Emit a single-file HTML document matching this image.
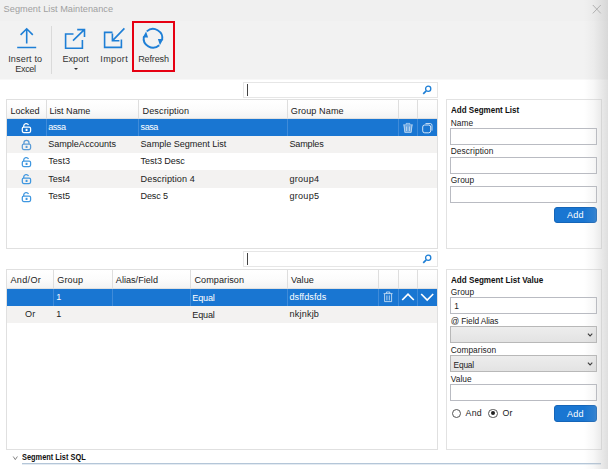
<!DOCTYPE html>
<html><head><meta charset="utf-8">
<style>
*{box-sizing:border-box;margin:0;padding:0}
html,body{width:608px;height:469px;overflow:hidden;background:#fff}
body{font-family:"Liberation Sans",sans-serif;font-size:9px;color:#222;position:relative}
.abs{position:absolute}
.t{position:absolute;white-space:nowrap;line-height:1}
.hdr{position:absolute;background:linear-gradient(#ffffff 0%,#fcfcfc 50%,#f3f3f3 100%);border-bottom:1px solid #e0e0e0}
.grid{position:absolute;border:1px solid #e0e0e0;background:#fff}
.vl{position:absolute;width:1px}
.row{position:absolute}
.inp{position:absolute;border:1px solid #b9bbc2;background:#fff}
.dd{position:absolute;border:1px solid #b8b8b8;background:linear-gradient(#ededed,#e3e3e3)}
.btn{position:absolute;background:#1976d2;border:1px solid #1565b8;border-radius:3px}
.panel{position:absolute;border:1px solid #e2e2e2;background:#fff}
</style></head><body>
<div class="abs" style="left:0;top:0;width:608px;height:21px;background:#f0f0f0"></div>
<div class="abs" style="left:0;top:21px;width:608px;height:58px;background:#f2f2f2"></div>
<div class="abs" style="left:0;top:79px;width:608px;height:1px;background:#f8f8f8"></div>
<svg class="abs" style="left:591px;top:3px" width="12" height="12" viewBox="0 0 12 12"><path d="M1.8 2L9.8 10.4M9.8 2L1.8 10.4" stroke="#a6a6a6" stroke-width="0.9" fill="none"/></svg>

<svg class="abs" style="left:14px;top:25px" width="26" height="26" viewBox="0 0 26 26"><path d="M3.2 22.5H22.2M12.7 18.6V4.2M6.6 9.9L12.7 3.8L18.8 9.9" stroke="#1e7fd6" stroke-width="1.6" fill="none"/></svg>
<div class="abs" style="left:51px;top:26px;width:1px;height:48px;background:#dadada"></div>
<svg class="abs" style="left:62px;top:25px" width="26" height="26" viewBox="0 0 26 26"><path d="M11.5 9H3.6V23.2H20.4V15M11 15.6L22.3 4.6M15.2 4.6H22.5V11.9" stroke="#1e7fd6" stroke-width="1.6" fill="none"/></svg>
<div class="abs" style="left:73.5px;top:67.6px;width:0;height:0;border-left:2.2px solid transparent;border-right:2.2px solid transparent;border-top:2.6px solid #333"></div>
<svg class="abs" style="left:101px;top:25px" width="26" height="26" viewBox="0 0 26 26"><path d="M11.5 7.4H3.6V22.4H20.4V14.4M23.4 3.4L11.6 15.6M11.4 8.6V15.8H18.4" stroke="#1e7fd6" stroke-width="1.6" fill="none"/></svg>
<div class="abs" style="left:132px;top:21px;width:43px;height:51px;border:2px solid #e60012"></div>
<svg class="abs" style="left:140px;top:25px" width="26" height="26" viewBox="0 0 26 26"><path d="M6.78 6.39 A9.3 9.3 0 0 1 22.10 15.23M19.22 20.21 A9.3 9.3 0 0 1 3.90 11.37" stroke="#1e7fd6" stroke-width="1.9" fill="none"/><path d="M17.89 13.98 L23.28 14.02 L19.93 20.21 ZM8.11 12.62 L2.72 12.58 L6.07 6.39 Z" fill="#1e7fd6"/></svg>

<div class="abs" style="left:243px;top:82px;width:195px;height:16px;border:1px solid #e6e6e6;background:#fff"></div>
<div class="abs" style="left:247px;top:83.6px;width:1.4px;height:12px;background:#444"></div>
<svg class="abs" style="left:421px;top:84px" width="12" height="12" viewBox="0 0 12 12"><circle cx="7.2" cy="4.8" r="2.6" stroke="#1e7fd6" stroke-width="1.3" fill="none"/><path d="M5.2 6.8L2.2 9.8" stroke="#1e7fd6" stroke-width="1.7"/></svg>
<div class="grid" style="left:6px;top:99px;width:432px;height:150px">
<div class="hdr" style="left:0;top:0;width:430px;height:19px"></div>
<div class="row" style="left:0;top:19px;width:430px;height:17px;background:#1976d2"></div>
<div class="row" style="left:0;top:36px;width:430px;height:17px;background:#f3f2f1"></div>
<div class="row" style="left:0;top:70px;width:430px;height:18px;background:#f3f2f1"></div>
<div class="vl" style="left:39px;top:0px;height:19px;background:#dedede"></div><div class="vl" style="left:131px;top:0px;height:19px;background:#dedede"></div><div class="vl" style="left:280px;top:0px;height:19px;background:#dedede"></div><div class="vl" style="left:391px;top:0px;height:19px;background:#dedede"></div><div class="vl" style="left:410px;top:0px;height:19px;background:#dedede"></div>
<div class="vl" style="left:39px;top:19px;height:17px;background:#3f8bd9"></div><div class="vl" style="left:131px;top:19px;height:17px;background:#3f8bd9"></div><div class="vl" style="left:280px;top:19px;height:17px;background:#3f8bd9"></div><div class="vl" style="left:391px;top:19px;height:17px;background:#3f8bd9"></div><div class="vl" style="left:410px;top:19px;height:17px;background:#3f8bd9"></div>
</div>
<svg class="abs" style="left:20.6px;top:121.7px" width="12" height="12" viewBox="0 0 12 12"><rect x="1.3" y="5.2" width="8.3" height="5.3" rx="1.4" stroke="#fff" stroke-width="1.25" fill="none"/><path d="M2.7 5V3.9A2.5 2.5 0 0 1 7.5 3.1" stroke="#fff" stroke-width="1.25" fill="none"/><rect x="4.6" y="6.8" width="1.9" height="2.2" fill="#fff"/></svg>
<svg class="abs" style="left:20.6px;top:138.7px" width="12" height="12" viewBox="0 0 12 12"><rect x="1.3" y="5.2" width="8.3" height="5.3" rx="1.4" stroke="#5a9bd6" stroke-width="1.25" fill="none"/><path d="M2.9 5V3.9A2.55 2.55 0 0 1 8 3.9V5" stroke="#5a9bd6" stroke-width="1.25" fill="none"/><rect x="4.6" y="6.8" width="1.9" height="2.2" fill="#5a9bd6"/></svg>
<svg class="abs" style="left:20.6px;top:155.7px" width="12" height="12" viewBox="0 0 12 12"><rect x="1.3" y="5.2" width="8.3" height="5.3" rx="1.4" stroke="#3f97e0" stroke-width="1.25" fill="none"/><path d="M2.7 5V3.9A2.5 2.5 0 0 1 7.5 3.1" stroke="#3f97e0" stroke-width="1.25" fill="none"/><rect x="4.6" y="6.8" width="1.9" height="2.2" fill="#3f97e0"/></svg>
<svg class="abs" style="left:20.6px;top:172.7px" width="12" height="12" viewBox="0 0 12 12"><rect x="1.3" y="5.2" width="8.3" height="5.3" rx="1.4" stroke="#3f97e0" stroke-width="1.25" fill="none"/><path d="M2.7 5V3.9A2.5 2.5 0 0 1 7.5 3.1" stroke="#3f97e0" stroke-width="1.25" fill="none"/><rect x="4.6" y="6.8" width="1.9" height="2.2" fill="#3f97e0"/></svg>
<svg class="abs" style="left:20.6px;top:190.7px" width="12" height="12" viewBox="0 0 12 12"><rect x="1.3" y="5.2" width="8.3" height="5.3" rx="1.4" stroke="#3f97e0" stroke-width="1.25" fill="none"/><path d="M2.7 5V3.9A2.5 2.5 0 0 1 7.5 3.1" stroke="#3f97e0" stroke-width="1.25" fill="none"/><rect x="4.6" y="6.8" width="1.9" height="2.2" fill="#3f97e0"/></svg>
<svg class="abs" style="left:402px;top:122px" width="12" height="12" viewBox="0 0 12 12"><path d="M1.6 3.2L2.6 10.6H9.4L10.4 3.2Z" fill="rgba(255,255,255,0.35)"/><path d="M1.2 2.8H10.8M4.2 2.4V1.4H7.8V2.4M2 3L2.8 10.4H9.2L10 3M4.6 4.5V9M7.4 4.5V9" stroke="rgba(255,255,255,0.55)" stroke-width="1" fill="none"/></svg>
<svg class="abs" style="left:421px;top:122px" width="12" height="12" viewBox="0 0 12 12"><rect x="1.7" y="3" width="8" height="7.8" rx="2" stroke="rgba(255,255,255,0.8)" stroke-width="1" fill="none"/><path d="M4.5 1.5H9.3A1.8 1.8 0 0 1 11 3.3V8.6" stroke="rgba(255,255,255,0.8)" fill="none" stroke-width="0.9"/></svg>
<div class="panel" style="left:446px;top:99px;width:156px;height:150px"></div>
<div class="inp" style="left:450px;top:128px;width:147px;height:17px"></div>
<div class="inp" style="left:450px;top:157px;width:147px;height:17px"></div>
<div class="inp" style="left:450px;top:186px;width:147px;height:17px"></div>
<div class="btn" style="left:554px;top:207px;width:43px;height:16px"></div>
<div class="abs" style="left:243px;top:251px;width:195px;height:16px;border:1px solid #e6e6e6;background:#fff"></div>
<div class="abs" style="left:247px;top:252.6px;width:1.4px;height:12px;background:#444"></div>
<svg class="abs" style="left:421px;top:253px" width="12" height="12" viewBox="0 0 12 12"><circle cx="7.2" cy="4.8" r="2.6" stroke="#1e7fd6" stroke-width="1.3" fill="none"/><path d="M5.2 6.8L2.2 9.8" stroke="#1e7fd6" stroke-width="1.7"/></svg>
<div class="grid" style="left:6px;top:269px;width:432px;height:181px">
<div class="hdr" style="left:0;top:0;width:430px;height:19px"></div>
<div class="row" style="left:0;top:19px;width:430px;height:17px;background:#1976d2"></div>
<div class="row" style="left:0;top:36px;width:430px;height:17px;background:#f3f2f1"></div>
<div class="vl" style="left:46px;top:0px;height:19px;background:#dedede"></div><div class="vl" style="left:105px;top:0px;height:19px;background:#dedede"></div><div class="vl" style="left:183px;top:0px;height:19px;background:#dedede"></div><div class="vl" style="left:280px;top:0px;height:19px;background:#dedede"></div><div class="vl" style="left:371px;top:0px;height:19px;background:#dedede"></div><div class="vl" style="left:391px;top:0px;height:19px;background:#dedede"></div><div class="vl" style="left:410px;top:0px;height:19px;background:#dedede"></div>
<div class="vl" style="left:46px;top:19px;height:17px;background:#3f8bd9"></div><div class="vl" style="left:105px;top:19px;height:17px;background:#3f8bd9"></div><div class="vl" style="left:183px;top:19px;height:17px;background:#3f8bd9"></div><div class="vl" style="left:280px;top:19px;height:17px;background:#3f8bd9"></div><div class="vl" style="left:371px;top:19px;height:17px;background:#3f8bd9"></div><div class="vl" style="left:391px;top:19px;height:17px;background:#3f8bd9"></div><div class="vl" style="left:410px;top:19px;height:17px;background:#3f8bd9"></div>
</div>
<svg class="abs" style="left:382px;top:290px" width="12" height="13" viewBox="0 0 12 13"><path d="M1.6 3.6H10.6M4.4 3.4V2H7.8V3.4M2.6 4V11.6H9.6V4M4.9 5.4V10.4M7.3 5.4V10.4" stroke="rgba(255,255,255,0.75)" stroke-width="0.9" fill="none"/></svg>
<svg class="abs" style="left:400px;top:291px" width="16" height="12" viewBox="0 0 16 12"><path d="M2.2 9L8 3.2L13.8 9" stroke="#fff" stroke-width="1.7" fill="none"/></svg>
<svg class="abs" style="left:419px;top:291px" width="16" height="12" viewBox="0 0 16 12"><path d="M2.2 3L8.2 9L14.2 3" stroke="#fff" stroke-width="1.7" fill="none"/></svg>
<div class="panel" style="left:446px;top:269px;width:156px;height:181px"></div>
<div class="inp" style="left:450px;top:297px;width:147px;height:17px"></div>
<div class="dd" style="left:450px;top:326px;width:147px;height:17px"></div>
<div class="dd" style="left:450px;top:355px;width:147px;height:17px"></div>
<svg class="abs" style="left:586px;top:331.5px" width="8" height="6" viewBox="0 0 8 6"><path d="M1.9 1.7L4.1 3.9L6.3 1.7" stroke="#333" stroke-width="1.1" fill="none"/></svg>
<svg class="abs" style="left:586px;top:360.5px" width="8" height="6" viewBox="0 0 8 6"><path d="M1.9 1.7L4.1 3.9L6.3 1.7" stroke="#333" stroke-width="1.1" fill="none"/></svg>
<div class="inp" style="left:450px;top:384px;width:147px;height:17px"></div>
<div class="btn" style="left:554px;top:405px;width:43px;height:17px"></div>
<div class="abs" style="left:451.5px;top:408.7px;width:9.4px;height:9.4px;border:1px solid #555;border-radius:50%;background:#fff"></div>
<div class="abs" style="left:488.4px;top:408.7px;width:9.4px;height:9.4px;border:1px solid #555;border-radius:50%;background:#fff"></div>
<div class="abs" style="left:491px;top:411.3px;width:4.2px;height:4.2px;border-radius:50%;background:#222"></div>
<svg class="abs" style="left:12px;top:455px" width="7" height="6" viewBox="0 0 7 6"><path d="M1.2 1.5L3.3 4.6L5.4 1.5" stroke="#666" stroke-width="0.8" fill="none"/></svg>
<div class="abs" style="left:22px;top:463px;width:579px;height:1px;background:#b4c6d8"></div><div class="abs" style="left:22px;top:464px;width:579px;height:1px;background:#e4ebf2"></div>
<div class="t" style="left:3.60px;top:5.03px;font-size:9.18px;letter-spacing:0.039px;color:#a0a0a0">Segment List Maintenance</div>
<div class="t" style="left:8.16px;top:54.51px;font-size:9.09px;letter-spacing:0.142px;color:#333">Insert to</div>
<div class="t" style="left:15.31px;top:64.91px;font-size:9.09px;letter-spacing:-0.363px;color:#333">Excel</div>
<div class="t" style="left:62.50px;top:55.41px;font-size:9.09px;letter-spacing:0.006px;color:#333">Export</div>
<div class="t" style="left:100.30px;top:54.51px;font-size:9.09px;letter-spacing:0.341px;color:#333">Import</div>
<div class="t" style="left:138.20px;top:54.51px;font-size:9.09px;letter-spacing:-0.163px;color:#333">Refresh</div>
<div class="t" style="left:10.50px;top:106.51px;font-size:9.09px;letter-spacing:-0.033px;color:#222">Locked</div>
<div class="t" style="left:49.50px;top:106.51px;font-size:9.09px;letter-spacing:-0.005px;color:#222">List Name</div>
<div class="t" style="left:142.50px;top:106.51px;font-size:9.09px;letter-spacing:0.116px;color:#222">Description</div>
<div class="t" style="left:290.80px;top:106.51px;font-size:9.09px;letter-spacing:0.091px;color:#222">Group Name</div>
<div class="t" style="left:48.20px;top:123.11px;font-size:9.09px;letter-spacing:-0.455px;color:#fff">assa</div>
<div class="t" style="left:140.60px;top:123.11px;font-size:9.09px;letter-spacing:-0.455px;color:#fff">sasa</div>
<div class="t" style="left:48.20px;top:140.29px;font-size:9.09px;letter-spacing:-0.016px;color:#222">SampleAccounts</div>
<div class="t" style="left:140.60px;top:140.29px;font-size:9.09px;letter-spacing:-0.036px;color:#222">Sample Segment List</div>
<div class="t" style="left:289.40px;top:140.29px;font-size:9.09px;letter-spacing:-0.160px;color:#222">Samples</div>
<div class="t" style="left:48.20px;top:157.47px;font-size:9.09px;letter-spacing:0.030px;color:#222">Test3</div>
<div class="t" style="left:140.60px;top:157.47px;font-size:9.09px;letter-spacing:-0.088px;color:#222">Test3 Desc</div>
<div class="t" style="left:48.20px;top:174.65px;font-size:9.09px;letter-spacing:0.030px;color:#222">Test4</div>
<div class="t" style="left:140.60px;top:174.65px;font-size:9.09px;letter-spacing:0.098px;color:#222">Description 4</div>
<div class="t" style="left:289.40px;top:174.65px;font-size:9.09px;letter-spacing:0.270px;color:#222">group4</div>
<div class="t" style="left:48.20px;top:191.83px;font-size:9.09px;letter-spacing:0.030px;color:#222">Test5</div>
<div class="t" style="left:140.60px;top:191.83px;font-size:9.09px;letter-spacing:-0.178px;color:#222">Desc 5</div>
<div class="t" style="left:289.40px;top:191.83px;font-size:9.09px;letter-spacing:0.270px;color:#222">group5</div>
<div class="t" style="left:450.60px;top:106.36px;font-size:9.02px;color:#111;font-weight:bold;transform-origin:0 0;transform:scaleX(0.8899)">Add Segment List</div>
<div class="t" style="left:450.70px;top:118.95px;font-size:8.33px;letter-spacing:0.075px;color:#222">Name</div>
<div class="t" style="left:450.70px;top:147.45px;font-size:8.33px;letter-spacing:0.106px;color:#222">Description</div>
<div class="t" style="left:450.70px;top:176.45px;font-size:8.33px;letter-spacing:0.101px;color:#222">Group</div>
<div class="t" style="left:10.50px;top:276.21px;font-size:9.09px;letter-spacing:0.306px;color:#222">And/Or</div>
<div class="t" style="left:57.30px;top:276.21px;font-size:9.09px;letter-spacing:0.111px;color:#222">Group</div>
<div class="t" style="left:115.80px;top:276.21px;font-size:9.09px;letter-spacing:0.028px;color:#222">Alias/Field</div>
<div class="t" style="left:194.50px;top:276.21px;font-size:9.09px;letter-spacing:0.060px;color:#222">Comparison</div>
<div class="t" style="left:291.00px;top:276.21px;font-size:9.09px;letter-spacing:0.067px;color:#222">Value</div>
<div class="t" style="left:56.30px;top:293.11px;font-size:9.09px;letter-spacing:-0.036px;color:#fff">1</div>
<div class="t" style="left:192.30px;top:293.81px;font-size:9.09px;letter-spacing:-0.162px;color:#fff">Equal</div>
<div class="t" style="left:289.40px;top:293.11px;font-size:9.09px;letter-spacing:0.090px;color:#fff">dsffdsfds</div>
<div class="t" style="left:25.00px;top:310.11px;font-size:9.09px;letter-spacing:0.080px;color:#222">Or</div>
<div class="t" style="left:56.30px;top:310.11px;font-size:9.09px;letter-spacing:-0.036px;color:#222">1</div>
<div class="t" style="left:192.30px;top:310.81px;font-size:9.09px;letter-spacing:-0.162px;color:#222">Equal</div>
<div class="t" style="left:289.40px;top:310.11px;font-size:9.09px;letter-spacing:0.210px;color:#222">nkjnkjb</div>
<div class="t" style="left:450.70px;top:275.76px;font-size:9.02px;color:#111;font-weight:bold;transform-origin:0 0;transform:scaleX(0.8988)">Add Segment List Value</div>
<div class="t" style="left:450.70px;top:287.95px;font-size:8.33px;letter-spacing:0.101px;color:#222">Group</div>
<div class="t" style="left:454.30px;top:302.15px;font-size:8.33px;letter-spacing:-0.034px;color:#222">1</div>
<div class="t" style="left:450.70px;top:316.95px;font-size:8.33px;letter-spacing:-0.077px;color:#222">@ Field Alias</div>
<div class="t" style="left:450.70px;top:345.95px;font-size:8.33px;letter-spacing:0.054px;color:#222">Comparison</div>
<div class="t" style="left:453.50px;top:360.55px;font-size:8.33px;letter-spacing:-0.149px;color:#222">Equal</div>
<div class="t" style="left:450.70px;top:374.95px;font-size:8.33px;letter-spacing:0.060px;color:#222">Value</div>
<div class="t" style="left:465.60px;top:409.16px;font-size:8.79px;letter-spacing:0.185px;color:#222">And</div>
<div class="t" style="left:502.50px;top:409.16px;font-size:8.79px;letter-spacing:0.080px;color:#222">Or</div>
<div class="t" style="left:566.93px;top:409.91px;font-size:9.09px;letter-spacing:0.260px;color:#fff">Add</div>
<div class="t" style="left:566.93px;top:210.81px;font-size:9.09px;letter-spacing:0.260px;color:#fff">Add</div>
<div class="t" style="left:22.20px;top:453.27px;font-size:9.13px;color:#111;font-weight:bold;transform-origin:0 0;transform:scaleX(0.8106)">Segment List SQL</div>
<div class="abs" style="left:584px;top:0;width:24px;height:469px;background:linear-gradient(90deg,rgba(190,190,190,0),rgba(190,190,190,0.12) 40%,rgba(190,190,190,0.5))"></div>
</body></html>
